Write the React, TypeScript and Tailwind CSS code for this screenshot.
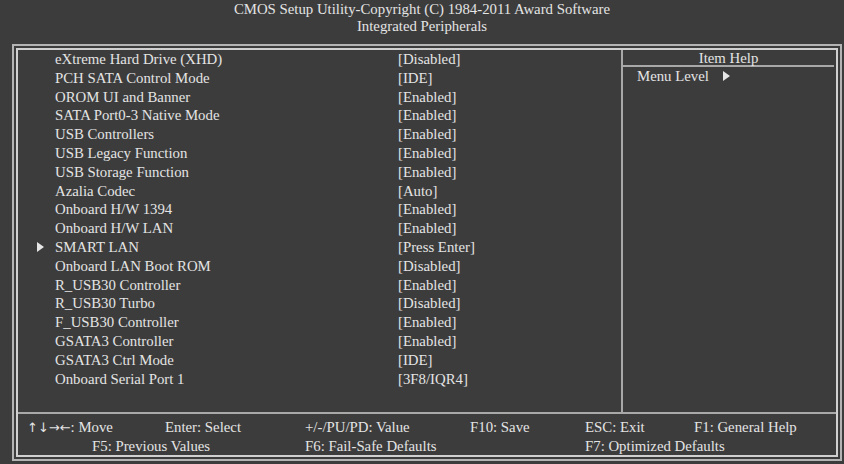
import React from 'react';

const items: { label: string; value: string; sub?: boolean }[] = [
  { label: 'eXtreme Hard Drive (XHD)', value: '[Disabled]' },
  { label: 'PCH SATA Control Mode', value: '[IDE]' },
  { label: 'OROM UI and Banner', value: '[Enabled]' },
  { label: 'SATA Port0-3 Native Mode', value: '[Enabled]' },
  { label: 'USB Controllers', value: '[Enabled]' },
  { label: 'USB Legacy Function', value: '[Enabled]' },
  { label: 'USB Storage Function', value: '[Enabled]' },
  { label: 'Azalia Codec', value: '[Auto]' },
  { label: 'Onboard H/W 1394', value: '[Enabled]' },
  { label: 'Onboard H/W LAN', value: '[Enabled]' },
  { label: 'SMART LAN', value: '[Press Enter]', sub: true },
  { label: 'Onboard LAN Boot ROM', value: '[Disabled]' },
  { label: 'R_USB30 Controller', value: '[Enabled]' },
  { label: 'R_USB30 Turbo', value: '[Disabled]' },
  { label: 'F_USB30 Controller', value: '[Enabled]' },
  { label: 'GSATA3 Controller', value: '[Enabled]' },
  { label: 'GSATA3 Ctrl Mode', value: '[IDE]' },
  { label: 'Onboard Serial Port 1', value: '[3F8/IQR4]' },
];

const Tri = () => (
  <svg width="7" height="10" viewBox="0 0 7 10" className="inline-block">
    <polygon points="0,0 7,5 0,10" fill="#e6e6e6" />
  </svg>
);

export default function App() {
  return (
    <div className="w-[844px] h-[464px] bg-[#3c3c3c] text-[#e4e4e4] text-[14.8px] font-['Liberation_Serif',serif] overflow-hidden">
      {/* Title */}
      <div className="h-[44px] pt-[1px] text-center leading-[17px]">
        <div>CMOS Setup Utility-Copyright (C) 1984-2011 Award Software</div>
        <div>Integrated Peripherals</div>
      </div>

      {/* Double frame */}
      <div className="ml-[12px] w-[830px] h-[417px] border-2 border-[#b4b4b4] p-[2px]">
        <div className="h-full border-2 border-[#d0d0d0] flex flex-col">
          <div className="flex h-[362px]">
            {/* Item list */}
            <div className="w-[603px] leading-[18.8px]">
              {items.map((it) => (
                <div key={it.label} className="flex h-[18.8px]">
                  <div className="w-[37px] flex items-center justify-end pr-[11px]">
                    {it.sub && <Tri />}
                  </div>
                  <div className="w-[343px]">{it.label}</div>
                  <div>{it.value}</div>
                </div>
              ))}
            </div>

            {/* Item help */}
            <div className="flex-1 border-l-2 border-[#a8a8a8] flex flex-col">
              <div className="h-[17px] leading-[17px] text-center border-b-2 border-[#a8a8a8] mr-[2px]">
                Item Help
              </div>
              <div className="pl-[14px] leading-[18px] flex items-center gap-[14px]">
                <span>Menu Level</span>
                <Tri />
              </div>
            </div>
          </div>

          {/* Footer */}
          <div className="border-t-2 border-[#a8a8a8] pt-[4px] leading-[18px]">
            <div className="flex">
              <span className="ml-[9px] w-[138px]">
                <span className="font-['DejaVu_Sans',sans-serif] text-[13px]">↑↓→←</span>: Move
              </span>
              <span className="w-[140px]">Enter: Select</span>
              <span className="w-[165px]">+/-/PU/PD: Value</span>
              <span className="w-[115px]">F10: Save</span>
              <span className="w-[109px]">ESC: Exit</span>
              <span>F1: General Help</span>
            </div>
            <div className="flex">
              <span className="ml-[74px] w-[213px]">F5: Previous Values</span>
              <span className="w-[280px]">F6: Fail-Safe Defaults</span>
              <span>F7: Optimized Defaults</span>
            </div>
          </div>
        </div>
      </div>
    </div>
  );
}
